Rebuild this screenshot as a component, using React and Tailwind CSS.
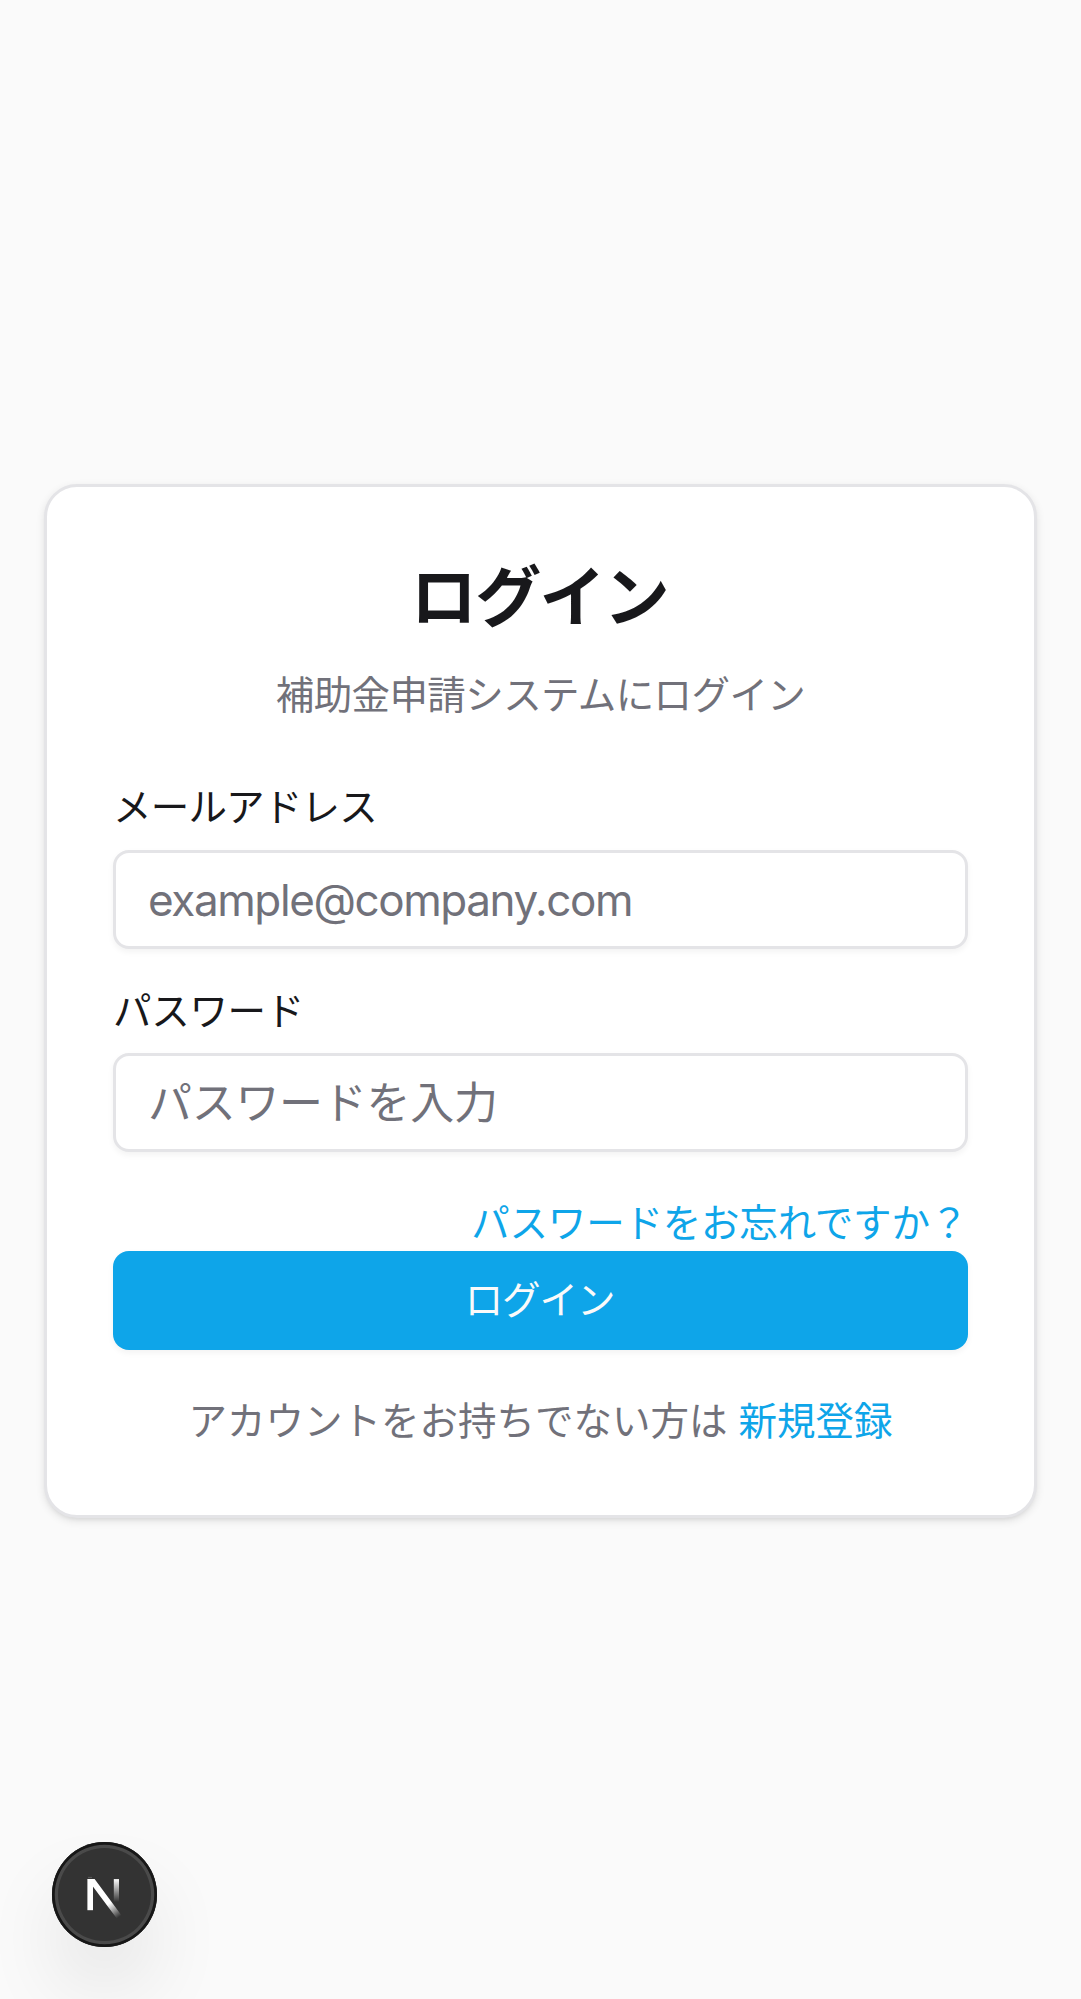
import { useId } from "react";

const fieldClass =
  "block h-[99px] w-full rounded-[16px] border-3 border-[#e4e4e7] bg-white px-[32px] text-[44px] text-[#18181b] shadow-[0_3px_6px_rgba(0,0,0,0.05)] outline-none placeholder:text-[#71717a] placeholder:opacity-100";

function Field({ label, type, placeholder, className, labelClass, inputClass }) {
  const id = useId();
  return (
    <div className={className}>
      <label htmlFor={id} className={`block h-[38.5px] text-[38.5px] leading-[38.5px] ${labelClass}`}>
        {label}
      </label>
      <input id={id} type={type} placeholder={placeholder} className={`${fieldClass} mt-[23px] ${inputClass}`} />
    </div>
  );
}

function DevBadge() {
  return (
    <button
      aria-label="Next.js"
      className="fixed top-[1842px] left-[52px] flex size-[105px] items-center justify-center rounded-full bg-[#333] shadow-[inset_0_0_0_2.75px_#171717,inset_0_0_0_6px_#4a4a4a,0_44px_88px_-22px_rgba(0,0,0,0.24)]"
    >
      <svg width="105" height="105" viewBox="0 0 105 105" fill="none">
        <path d="M38.2 68.2V37.1" stroke="white" strokeWidth="5.6" />
        <path d="M36 35.4H40" stroke="white" strokeOpacity="0.2" strokeWidth="1" />
        <path d="M35.4 37.1H42.6L69.4 73.2C68 74.6 66.5 75.6 64.8 76.6L40.9 44.5L38.2 41Z" fill="url(#diagonal)" />
        <path d="M64.4 37.1V60" stroke="url(#post)" strokeWidth="5.2" />
        <defs>
          <linearGradient id="diagonal" x1="56" y1="60" x2="67" y2="75" gradientUnits="userSpaceOnUse">
            <stop stopColor="white" />
            <stop offset="0.1" stopColor="white" />
            <stop offset="1" stopColor="white" stopOpacity="0" />
          </linearGradient>
          <linearGradient id="post" x1="64" y1="37" x2="64" y2="60" gradientUnits="userSpaceOnUse">
            <stop stopColor="white" />
            <stop offset="1" stopColor="white" stopOpacity="0" />
          </linearGradient>
        </defs>
      </svg>
    </button>
  );
}

export default function App() {
  return (
    <main className="flex h-[1999px] items-start justify-center overflow-hidden bg-[#fafafa] pt-[484px] font-[Inter,'Noto_Sans_CJK_JP',sans-serif] text-[#18181b]">
      <section className="h-[1034px] w-[993px] rounded-[33px] border-3 border-[#e4e4e7] bg-white px-[66px] shadow-[0_3px_8px_rgba(0,0,0,0.1),0_3px_5px_-3px_rgba(0,0,0,0.1)]">
        <header className="pt-[77px] text-center">
          <h1 className="h-[66px] pr-[2px] text-[66px] leading-[66px] font-bold tracking-[-1.65px]">ログイン</h1>
          <p className="mt-[38px] h-[55px] text-[38.5px] leading-[55px] tracking-[-0.6px] text-[#71717a]">補助金申請システムにログイン</p>
        </header>
        <form onSubmit={(event) => event.preventDefault()}>
          <Field
            className="mt-[65px]"
            label="メールアドレス"
            labelClass="tracking-[-0.8px]"
            type="email"
            placeholder="example@company.com"
            inputClass="pt-[2px] tracking-[-1.4px]"
          />
          <Field
            className="mt-[43px]"
            label="パスワード"
            labelClass="tracking-[-0.3px]"
            type="password"
            placeholder="パスワードを入力"
            inputClass="tracking-[-0.3px]"
          />
          <div className="mt-[44px] flex h-[55px] justify-end">
            <a href="#" className="text-[38.5px] leading-[55px] tracking-[-0.2px] text-[#0ea5e9]">パスワードをお忘れですか？</a>
          </div>
          <button className="flex h-[99px] w-full items-center justify-center rounded-[16px] bg-[#0ea5e9] pr-[2px] text-[38.5px] tracking-[-1.1px] text-[#fafafa] shadow-[0_3px_6px_rgba(0,0,0,0.05)]">
            ログイン
          </button>
        </form>
        <p className="mt-[44px] text-center text-[38.5px] leading-[55px] text-[#71717a]">
          アカウントをお持ちでない方は <a href="#" className="text-[#0ea5e9]">新規登録</a>
        </p>
      </section>
      <DevBadge />
    </main>
  );
}
